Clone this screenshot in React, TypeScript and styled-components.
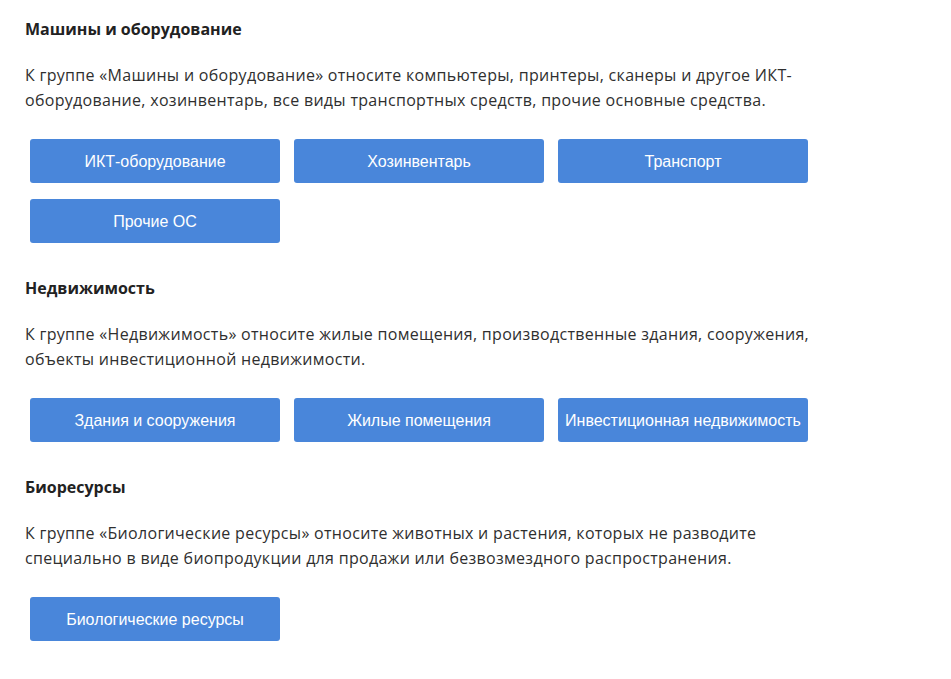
import React from "react";
import styled, { createGlobalStyle } from "styled-components";

const Global = createGlobalStyle`
  html, body { margin: 0; padding: 0; background: #ffffff; }
  body { font-family: "Open Sans", "Noto Sans", sans-serif; color: #333333; }
  * { box-sizing: border-box; }
`;

const Page = styled.div`
  padding: 19px 25px 20px 25px;
  width: 850px;
`;

const Section = styled.section`
  display: flex;
  flex-direction: column;
  margin-bottom: 35px;
  &:last-child { margin-bottom: 0; }
`;

const Heading = styled.h3`
  margin: 0 0 24px 0;
  font-size: 16px;
  line-height: 20px;
  font-weight: 700;
  color: #222222;
`;

const Text = styled.p`
  margin: 0 0 26px 0;
  font-size: 16px;
  line-height: 25px;
  letter-spacing: 0.3px;
  color: #2f2f2f;
`;

const Buttons = styled.div`
  display: grid;
  grid-template-columns: repeat(3, 250px);
  column-gap: 14px;
  row-gap: 16px;
  padding-left: 5px;
`;

const Button = styled.button`
  height: 44px;
  border: none;
  border-radius: 3px;
  background: #4986da;
  color: #ffffff;
  font-family: "Liberation Sans", Arial, sans-serif;
  font-size: 16px;
  padding: 2px 0 0 0;
  cursor: pointer;
  white-space: nowrap;
`;

const sections = [
  {
    title: "Машины и оборудование",
    text: "К группе «Машины и оборудование» относите компьютеры, принтеры, сканеры и другое ИКТ-оборудование, хозинвентарь, все виды транспортных средств, прочие основные средства.",
    buttons: ["ИКТ-оборудование", "Хозинвентарь", "Транспорт", "Прочие ОС"],
  },
  {
    title: "Недвижимость",
    text: "К группе «Недвижимость» относите жилые помещения, производственные здания, сооружения, объекты инвестиционной недвижимости.",
    buttons: ["Здания и сооружения", "Жилые помещения", "Инвестиционная недвижимость"],
  },
  {
    title: "Биоресурсы",
    text: "К группе «Биологические ресурсы» относите животных и растения, которых не разводите специально в виде биопродукции для продажи или безвозмездного распространения.",
    buttons: ["Биологические ресурсы"],
  },
];

export default function App() {
  return (
    <>
      <Global />
      <Page>
        {sections.map((s) => (
          <Section key={s.title}>
            <Heading>{s.title}</Heading>
            <Text>{s.text}</Text>
            <Buttons>
              {s.buttons.map((b) => (
                <Button key={b}>{b}</Button>
              ))}
            </Buttons>
          </Section>
        ))}
      </Page>
    </>
  );
}
